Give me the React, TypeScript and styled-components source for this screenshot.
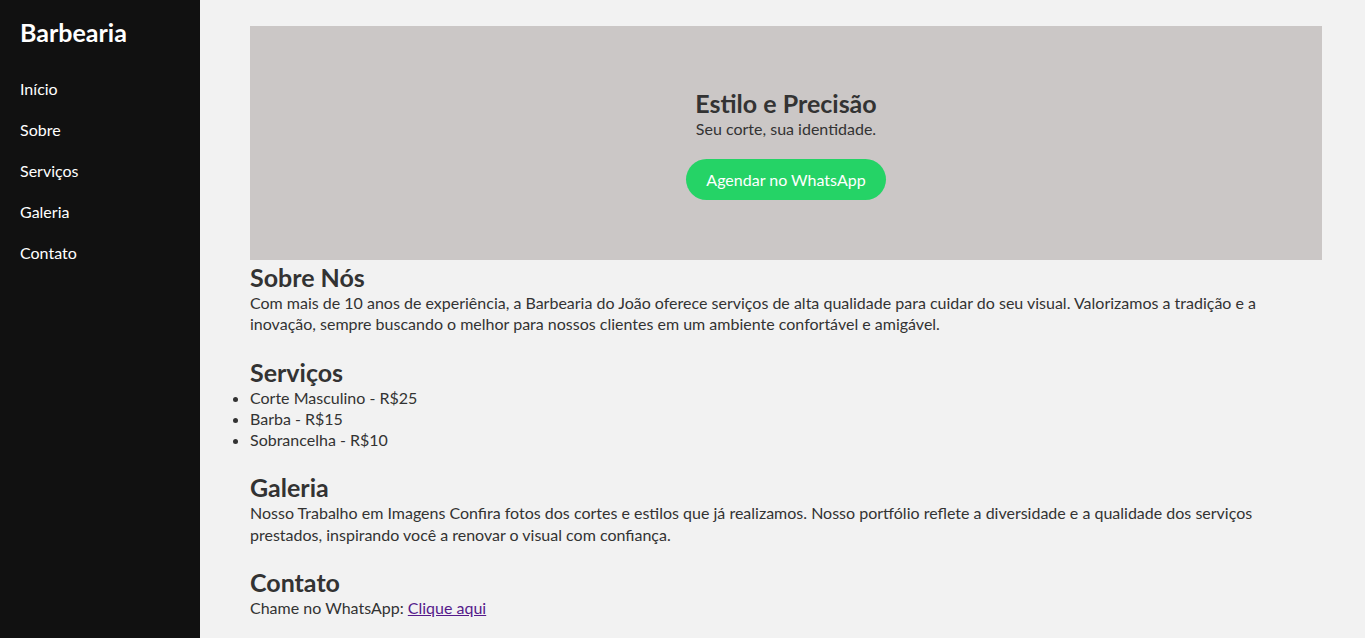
import React from "react";
import styled, { createGlobalStyle } from "styled-components";

const Global = createGlobalStyle`
  body {
    margin: 0;
    background: #f2f2f2;
    color: #333;
    font-family: "Segoe UI", "Lato", "Noto Sans", sans-serif;
  }
  * { box-sizing: border-box; }
`;

const Layout = styled.div`
  display: flex;
  min-height: 800px;
  background: #f2f2f2;
`;

const Sidebar = styled.aside`
  width: 200px;
  flex-shrink: 0;
  background: #111;
  color: #fff;
  padding: 18px 20px 20px;
`;

const Brand = styled.h2`
  margin: 0 0 21px;
  font-size: 25px;
  line-height: 29px;
  font-weight: 700;
`;

const Nav = styled.nav`
  display: flex;
  flex-direction: column;
`;

const NavLink = styled.a`
  color: #fff;
  text-decoration: none;
  font-size: 16px;
  line-height: 21px;
  padding: 10px 0;
`;

const Main = styled.main`
  flex: 1;
  padding: 26px 43px 0 50px;
`;

const Hero = styled.section`
  background: #cbc7c6;
  height: 234px;
  margin-bottom: 2px;
  display: flex;
  flex-direction: column;
  align-items: center;
  justify-content: center;
  text-align: center;
`;

const HeroTitle = styled.h1`
  margin: 0;
  padding-top: 1px;
  font-size: 25px;
  line-height: 30px;
  font-weight: 700;
  color: #333;
`;

const HeroText = styled.p`
  margin: 0 0 20px;
  font-size: 16px;
  line-height: 21px;
  color: #333;
`;

const CtaButton = styled.a`
  display: inline-block;
  background: #25d366;
  color: #fff;
  text-decoration: none;
  font-size: 16px;
  line-height: 21px;
  padding: 10px 20px;
  border-radius: 25px;
`;

const Section = styled.section`
  margin-bottom: 22px;
`;

const Title = styled.h2`
  margin: 0;
  font-size: 25px;
  line-height: 30px;
  font-weight: 700;
  color: #333;
`;

const Text = styled.p`
  margin: 0;
  font-size: 16px;
  line-height: 21.3px;
`;

const List = styled.ul`
  margin: 0;
  padding: 0;
  list-style: disc;
`;

const Item = styled.li`
  font-size: 16px;
  line-height: 21.3px;
`;

const Link = styled.a`
  color: #551a8b;
  text-decoration: underline;
`;

export default function App() {
  return (
    <>
      <Global />
      <Layout>
        <Sidebar>
          <Brand>Barbearia</Brand>
          <Nav>
            <NavLink href="#inicio">Início</NavLink>
            <NavLink href="#sobre">Sobre</NavLink>
            <NavLink href="#servicos">Serviços</NavLink>
            <NavLink href="#galeria">Galeria</NavLink>
            <NavLink href="#contato">Contato</NavLink>
          </Nav>
        </Sidebar>
        <Main>
          <Hero id="inicio">
            <HeroTitle>Estilo e Precisão</HeroTitle>
            <HeroText>Seu corte, sua identidade.</HeroText>
            <CtaButton href="#contato">Agendar no WhatsApp</CtaButton>
          </Hero>
          <Section id="sobre">
            <Title>Sobre Nós</Title>
            <Text>
              Com mais de 10 anos de experiência, a Barbearia do João oferece serviços de alta qualidade para cuidar do seu visual. Valorizamos a tradição e a inovação, sempre buscando o melhor para nossos clientes em um ambiente confortável e amigável.
            </Text>
          </Section>
          <Section id="servicos">
            <Title>Serviços</Title>
            <List>
              <Item>Corte Masculino - R$25</Item>
              <Item>Barba - R$15</Item>
              <Item>Sobrancelha - R$10</Item>
            </List>
          </Section>
          <Section id="galeria">
            <Title>Galeria</Title>
            <Text>
              Nosso Trabalho em Imagens Confira fotos dos cortes e estilos que já realizamos. Nosso portfólio reflete a diversidade e a qualidade dos serviços prestados, inspirando você a renovar o visual com confiança.
            </Text>
          </Section>
          <Section id="contato">
            <Title>Contato</Title>
            <Text>
              Chame no WhatsApp: <Link href="#whatsapp">Clique aqui</Link>
            </Text>
          </Section>
        </Main>
      </Layout>
    </>
  );
}
